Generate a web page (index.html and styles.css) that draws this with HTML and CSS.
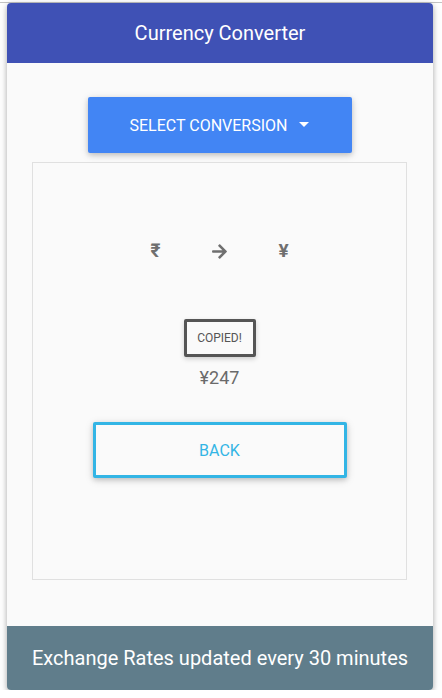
FILE: index.html
```html
<!DOCTYPE html>
<html>
<head>
<meta charset="utf-8">
<link rel="stylesheet" href="styles.css">
</head>
<body>
<div class="topline"></div>
<div class="card">
  <div class="header">Currency Converter</div>
  <div class="content">
    <button class="select-btn">SELECT CONVERSION <span class="caret"></span></button>
    <div class="panel">
      <div class="icons">
        <span class="sym">₹</span>
        <span class="sym arrow">
          <svg width="17" height="17" viewBox="0 0 448 512"><path fill="#6f6f6f" d="M190.5 66.9l22.2-22.2c9.4-9.4 24.6-9.4 33.9 0L441 239c9.4 9.4 9.4 24.6 0 33.9L246.6 467.3c-9.4 9.4-24.6 9.4-33.9 0l-22.2-22.2c-9.5-9.5-9.3-25 .4-34.3L311.4 296H24c-13.3 0-24-10.7-24-24v-32c0-13.3 10.7-24 24-24h287.4L190.9 101.2c-9.8-9.3-10-24.8-.4-34.3z"/></svg>
        </span>
        <span class="sym">¥</span>
      </div>
      <div class="copied">COPIED!</div>
      <div class="amount">¥247</div>
      <button class="back-btn">BACK</button>
    </div>
  </div>
  <div class="footer">Exchange Rates updated every 30 minutes</div>
</div>
</body>
</html>
```
FILE: styles.css
```css
html, body {
  margin: 0;
  padding: 0;
  background: #ffffff;
  font-family: Roboto, "Liberation Sans", sans-serif;
}
.topline {
  height: 1px;
  margin-top: 2px;
  background: #c4c4c4;
}
.card {
  margin-left: 7px;
  width: 426px;
  background: #fafafa;
  border-radius: 4px;
  overflow: hidden;
  box-shadow: 0 2px 5px rgba(0,0,0,0.22), 0 2px 10px rgba(0,0,0,0.16);
}
.header {
  height: 60px;
  background: #3f51b5;
  color: #fff;
  font-size: 20px;
  display: flex;
  align-items: center;
  justify-content: center;
}
.content {
  height: 563px;
  box-sizing: border-box;
  padding: 34px 26px 0 25px;
  display: flex;
  flex-direction: column;
  align-items: center;
}
.select-btn {
  width: 264px;
  height: 56px;
  border: none;
  border-radius: 2px;
  background: #4285f4;
  color: #fff;
  font-family: inherit;
  font-size: 16px;
  box-shadow: 0 2px 5px rgba(0,0,0,0.16), 0 2px 10px rgba(0,0,0,0.12);
  display: flex;
  align-items: center;
  justify-content: center;
  gap: 12px;
  padding: 0;
}
.caret {
  width: 0;
  height: 0;
  border-left: 5px solid transparent;
  border-right: 5px solid transparent;
  border-top: 5px solid #fff;
  margin-top: -2px;
}
.panel {
  margin-top: 9px;
  width: 375px;
  height: 418px;
  box-sizing: border-box;
  border: 1px solid #e0e0e0;
  display: flex;
  flex-direction: column;
  align-items: center;
}
.icons {
  margin-top: 77px;
  display: flex;
  justify-content: center;
  height: 22px;
  align-items: center;
}
.sym {
  width: 64px;
  text-align: center;
  font-size: 19px;
  font-weight: bold;
  color: #6f6f6f;
  line-height: 22px;
}
.arrow {
  display: flex;
  justify-content: center;
  align-items: center;
}
.copied {
  margin-top: 57px;
  width: 72px;
  height: 38px;
  box-sizing: border-box;
  border: 3px solid #555;
  border-radius: 2px;
  background: #fafafa;
  font-size: 12px;
  color: #555;
  display: flex;
  align-items: center;
  justify-content: center;
  box-shadow: 0 2px 5px rgba(0,0,0,0.18);
}
.amount {
  margin-top: 10px;
  font-size: 18px;
  color: #6a6a6a;
  line-height: 22px;
}
.back-btn {
  margin-top: 33px;
  width: 254px;
  height: 56px;
  box-sizing: border-box;
  border: 3px solid #33b5e5;
  border-radius: 2px;
  background: #fafafa;
  color: #33b5e5;
  font-family: inherit;
  font-size: 16px;
  box-shadow: 0 2px 5px rgba(0,0,0,0.16), 0 2px 10px rgba(0,0,0,0.12);
  padding: 0;
}
.footer {
  height: 64px;
  background: #607d8b;
  color: #fff;
  font-size: 20px;
  display: flex;
  align-items: center;
  justify-content: center;
}
```
